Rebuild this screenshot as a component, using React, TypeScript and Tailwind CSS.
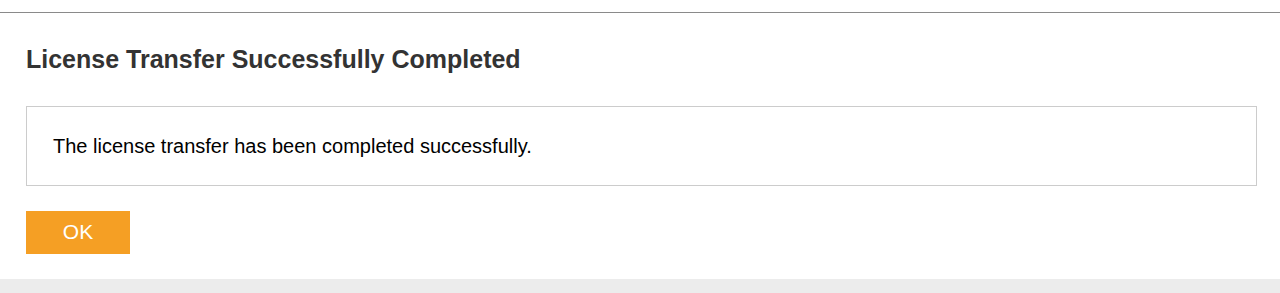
export default function App() {
  return (
    <div className="flex flex-col w-full h-[293px] bg-white font-[Liberation_Sans,Arial,sans-serif]">
      <div className="h-[12px] bg-white" />
      <div className="flex flex-col border-t border-[#8a8a8a] pl-[26px] pr-[23px] pt-[32px] pb-[25px]">
        <h1 className="text-[25px] leading-[29px] font-bold text-[#333333]">
          License Transfer Successfully Completed
        </h1>
        <div className="flex items-center h-[80px] mt-[32px] border border-[#cccccc] px-[26px]">
          <p className="text-[20px] leading-[23px] text-black">
            The license transfer has been completed successfully.
          </p>
        </div>
        <button className="flex items-center justify-center w-[104px] h-[43px] mt-[25px] bg-[#f59f24] text-white text-[21px] leading-[24px] pb-[2px]">
          OK
        </button>
      </div>
      <div className="flex-1 bg-[#ececec]" />
    </div>
  );
}
